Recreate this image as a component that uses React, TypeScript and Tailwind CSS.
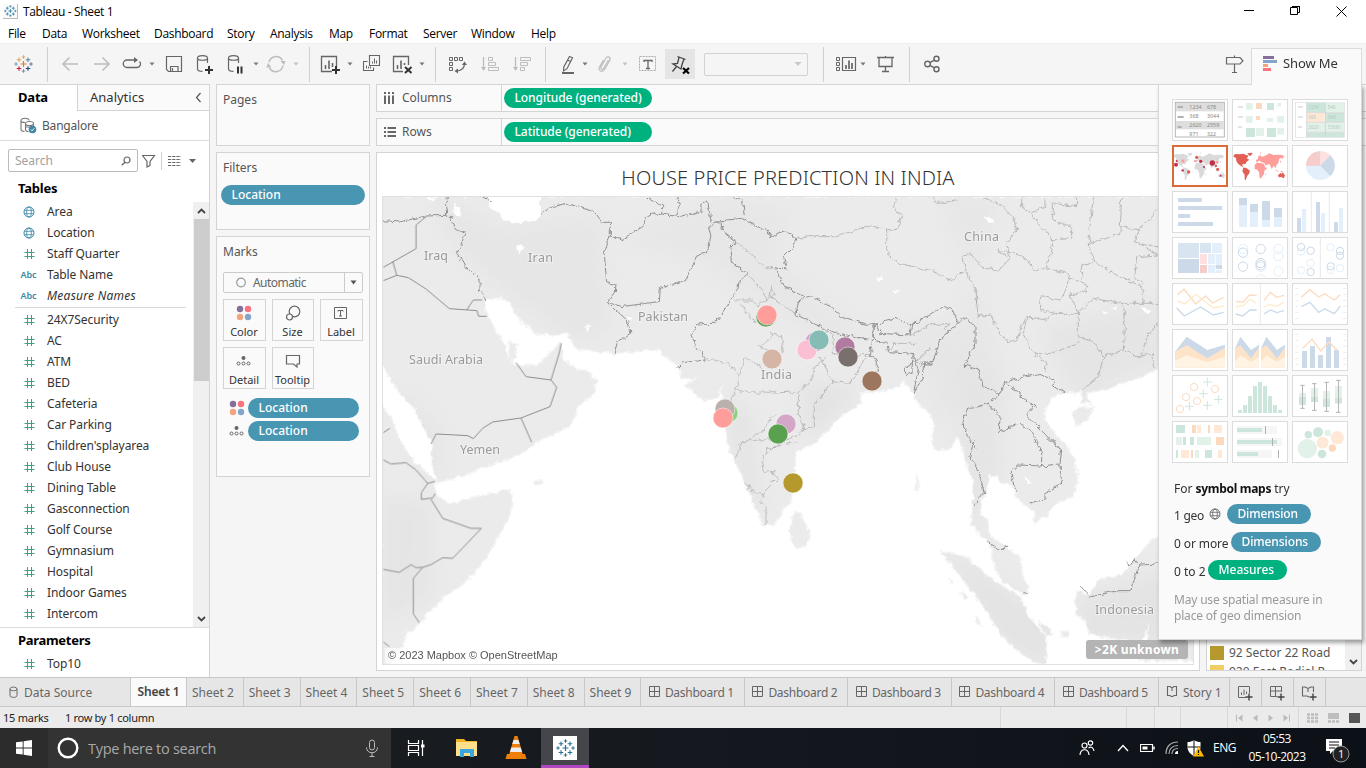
import React from "react";

const INK = "#666";
const PALE = "#bdbdbd";

function Svg({ children, w = 24, h = 24, className = "" }: { children: React.ReactNode; w?: number; h?: number; className?: string }) {
  return (
    <svg width={w} height={h} viewBox={`0 0 ${w} ${h}`} fill="none" className={`block shrink-0 ${className}`}>
      {children}
    </svg>
  );
}

function Plus({ x, y, s, c, w = 1.3 }: { x: number; y: number; s: number; c: string; w?: number }) {
  return <path d={`M${x - s} ${y}H${x + s}M${x} ${y - s}V${y + s}`} stroke={c} strokeWidth={w} />;
}

function TableauMark({ mono, size = 24 }: { mono?: string; size?: number }) {
  const c = (v: string) => mono ?? v;
  return (
    <svg width={size} height={size} viewBox="0 0 24 24" fill="none" className="block shrink-0">
      <Plus x={12.5} y={12} s={3} c={c("#e8762c")} w={1.2} />
      <Plus x={8} y={7.8} s={2.3} c={c("#e5a05a")} w={1.1} />
      <Plus x={17} y={7.8} s={2.3} c={c("#5b879b")} w={1.1} />
      <Plus x={8} y={16.5} s={2.3} c={c("#c72037")} w={1.1} />
      <Plus x={17} y={16.5} s={2.3} c={c("#1f447e")} w={1.1} />
      <Plus x={12.5} y={5} s={1.8} c={c("#e8a26c")} w={1} />
      <Plus x={12.5} y={19} s={1.8} c={c("#7b8ca8")} w={1} />
      <Plus x={5} y={12} s={1.8} c={c("#59a9b8")} w={1} />
      <Plus x={20} y={12} s={1.8} c={c("#6f6fa0")} w={1} />
    </svg>
  );
}

function Caret({ className = "", c = "#777" }: { className?: string; c?: string }) {
  return (
    <Svg w={8} h={8} className={className}>
      <path d="M1.500 2.500h5L4 5.500z" fill={c} />
    </Svg>
  );
}

const Sep = ({ className = "" }: { className?: string }) => <div className={`h-[35px] w-px shrink-0 bg-[#d0d0d0] ${className}`} />;

function Cylinder() {
  return (
    <path d="M14.500 11V6c0-3.300-10-3.300-10 0v11c0 1.600 2.500 2.400 5 2.400M4.500 6c0 3 10 3 10 0" stroke={INK} strokeWidth="1.200" />
  );
}

function Toolbar() {
  return (
    <div className="flex h-[41px] items-center border-t border-[#efefef] bg-[#f5f5f5]">
      <div className="ml-[11px]"><TableauMark /></div>
      <Sep className="ml-3" />
      <Svg className="ml-2.5"><path d="M20 12H5M11.500 5.500 5 12l6.500 6.500" stroke={PALE} strokeWidth="1.600" /></Svg>
      <Svg className="ml-2"><path d="M4 12h15M12.500 5.500 19 12l-6.500 6.500" stroke={PALE} strokeWidth="1.600" /></Svg>
      <Svg className="ml-1.5"><path d="M14 8H7a3.500 3.500 0 0 0 0 7.500h10a3.500 3.500 0 0 0 2.500-6M11.500 8h5" stroke={INK} strokeWidth="1.300" /><path d="M14 5v6l4-3z" fill={INK} /></Svg>
      <Caret className="ml-1" />
      <Svg className="ml-1.5"><path d="M4.500 4.500h15v15h-13l-2-2zM8.500 19v-4.500h7.500V19M10.500 16v3" stroke={INK} strokeWidth="1.200" /></Svg>
      <Svg className="ml-[7px]"><Cylinder /><Plus x={16} y={18} s={4} c="#333" w={2} /></Svg>
      <Svg className="ml-[7px]"><Cylinder /><path d="M14 14.500v7M17.500 14.500v7" stroke="#333" strokeWidth="2" /></Svg>
      <Caret className="ml-1" />
      <Svg className="ml-1"><path d="M5 10a7.300 7.300 0 0 1 13.500-1.500M19 13.500A7.300 7.300 0 0 1 5.500 16" stroke={PALE} strokeWidth="1.500" /><path d="M21.500 9h-5l3.500 4zM2.500 15.500h5L4 11z" fill={PALE} /></Svg>
      <Caret className="ml-1" c="#c2c2c2" />
      <Sep className="ml-[9px]" />
      <Svg className="ml-2"><path d="M14 19.500H3.500v-15h15V15" stroke={INK} strokeWidth="1.300" /><path d="M7.500 17v-4M11 17V8.500M14.500 15v-4" stroke={INK} strokeWidth="1.600" /><Plus x={18} y={18} s={4} c="#333" w={2} /></Svg>
      <Caret className="ml-1" />
      <Svg className="ml-[5px]"><path d="M10.500 3.500h10v10h-10zM8.500 9.500h-4v9h10v-3" stroke={INK} strokeWidth="1.100" /><path d="M13.500 11.500v-2M15.500 11.500v-5M17.500 11.500v-3M7.500 16.500v-3M9.500 16.500v-2M11.500 16.500v-2" stroke={INK} /></Svg>
      <Svg className="ml-[7px]"><path d="M13 19.500H3.500v-15h15V13" stroke={INK} strokeWidth="1.300" /><path d="M7.500 17v-4M11 17V8.500M14.500 13v-2" stroke={INK} strokeWidth="1.600" /><path d="m15 15 6.500 6M21.500 15 15 21" stroke="#333" strokeWidth="2" /></Svg>
      <Caret className="ml-1" />
      <Sep className="ml-[9px]" />
      <Svg className="ml-[9px]"><path d="M4.500 5.500h3v3h-3zM9.500 5.500h3v3h-3zM14.500 5.500h3v3h-3zM4.500 10.500h3v3h-3zM4.500 15.500h3v3h-3z" stroke={INK} /><path d="M19.500 11.500c0 5-3 7-7.500 7.500" stroke={INK} strokeWidth="1.200" /><path d="m17 13 2.500-3.500L22 13zM13 16.500 9.500 19l3.500 2.500z" fill={INK} /></Svg>
      <Svg className="ml-[9px]"><path d="M5.500 5v13" stroke={PALE} strokeWidth="1.300" /><path d="M3 15l2.500 4L8 15z" fill={PALE} /><path d="M10.500 5.500h4v3h-4zM10.500 10.500h7v3h-7zM10.500 15.500h10v3h-10z" stroke={PALE} /></Svg>
      <Svg className="ml-2"><path d="M5.500 5v13" stroke={PALE} strokeWidth="1.300" /><path d="M3 15l2.500 4L8 15z" fill={PALE} /><path d="M10.500 5.500h10v3h-10zM10.500 10.500h7v3h-7zM10.500 15.500h4v3h-4z" stroke={PALE} /></Svg>
      <Sep className="ml-[11px]" />
      <Svg className="ml-2.5"><path d="m13.500 4.500 3 1.200-5.500 11-3.500 2.200.3-4zM11.500 8l3 1.500" stroke={INK} strokeWidth="1.200" /><path d="M6 21h12" stroke={INK} strokeWidth="2" /></Svg>
      <Caret className="ml-px" />
      <Svg className="ml-1"><path d="m15.500 8-5 8.500c-1 1.700-3.500.5-2.500-1.500l5-9c1.500-2.500 5-.5 4 2l-5.500 9.500c-2 3.500-7 1-5-2.500l4-7" stroke={PALE} strokeWidth="1.200" /></Svg>
      <Caret className="ml-1" c="#c2c2c2" />
      <Svg className="ml-1.5"><path d="M4.500 4.500h16v14h-16z" stroke="#aaa" strokeDasharray="2 1" /><path d="M9 10V8.500h8V10M13 8.500v8M11 16.500h4" stroke={INK} strokeWidth="1.300" /></Svg>
      <div className="ml-1.5 flex size-[30px] items-center justify-center bg-[#e5e5e5]">
        <Svg><path d="m9.500 4.500 8 3M11 5.500l-1.500 6-4.500.5 8 5 1-4.500 2-5.500M8.500 14.500l-4 5" stroke="#444" strokeWidth="1.300" /><path d="m15 16 6 5.500M21 16l-6 5.500" stroke="#000" strokeWidth="2.200" /></Svg>
      </div>
      <div className="ml-[9px] flex h-[23px] w-[104px] items-center justify-end rounded-xs border border-[#d2d2d2] bg-[#f5f5f5] pr-1">
        <Svg w={10} h={8}><path d="M1.500 2h7L5 6z" fill="#c8c8c8" /></Svg>
      </div>
      <Sep className="ml-[15px]" />
      <Svg className="ml-2.5"><path d="M2.500 5.500h3v3h-3zM2.500 10.500h3v3h-3zM2.500 15.500h3v3h-3z" stroke={INK} /><path d="M8.500 5.500h13v13h-13z" stroke={INK} strokeWidth="1.200" /><path d="M12 17v-4M15 17V8.500M18 17v-6" stroke={INK} strokeWidth="1.700" /></Svg>
      <Caret className="ml-px" />
      <Svg className="ml-1.5"><path d="M4 5.500h17M6 6v8.500h13V6M12.500 4v1.500M12.500 14.500v4.500M9 19.500h7" stroke={INK} strokeWidth="1.300" /></Svg>
      <Sep className="ml-3" />
      <Svg className="ml-2.5"><circle cx="7.500" cy="12" r="2.800" stroke={INK} strokeWidth="1.400" /><circle cx="16.500" cy="6.800" r="2.500" stroke={INK} strokeWidth="1.400" /><circle cx="16.500" cy="17.200" r="2.500" stroke={INK} strokeWidth="1.400" /><path d="m10 10.600 4.300-2.500M10 13.400l4.300 2.500" stroke={INK} strokeWidth="1.300" /></Svg>
      <Svg className="ml-[278px]"><path d="M4.500 5.500H18l3 3.300-3 3.200H4.500zM12.500 3.500v2M12.500 12v8M10 20.500h5" stroke={INK} strokeWidth="1.200" /></Svg>
    </div>
  );
}

function Globe({ c = "#3b87a5", s = 12 }: { c?: string; s?: number }) {
  return (
    <svg width={s} height={s} viewBox="0 0 12 12" fill="none" stroke={c} className="block shrink-0">
      <circle cx="6" cy="6" r="5" />
      <ellipse cx="6" cy="6" rx="2.300" ry="5" strokeWidth=".8" />
      <path d="M1.500 4.300h9M1.500 7.700h9" strokeWidth=".8" />
    </svg>
  );
}

const Hash = () => (
  <Svg w={12} h={12}><path d="M4.500 1v10M8.500 1v10M1.500 4.500h10M1.500 8.500h10" stroke="#3aa383" strokeWidth="1" /></Svg>
);

function Field({ kind, name }: { kind: string; name: string }) {
  return (
    <div className="flex h-[21px] shrink-0 items-center">
      <div className="flex w-[47px] justify-center pl-2.5 pr-0">
        {kind === "geo" && <Globe />}
        {kind === "num" && <Hash />}
        {kind !== "geo" && kind !== "num" && <span className="text-[9px] font-semibold tracking-[0px] text-[#3b87a5]">Abc</span>}
      </div>
      <span className={`text-[12px] text-[#333] ${kind === "abci" ? "italic tracking-[0.250px]" : "tracking-[-0.080px]"}`}>{name}</span>
    </div>
  );
}

const DIMS = [["geo", "Area"], ["geo", "Location"], ["num", "Staff Quarter"], ["abc", "Table Name"], ["abci", "Measure Names"]];
const MEAS = ["24X7Security", "AC", "ATM", "BED", "Cafeteria", "Car Parking", "Children'splayarea", "Club House", "Dining Table", "Gasconnection", "Golf Course", "Gymnasium", "Hospital", "Indoor Games", "Intercom"];

function DataPane() {
  return (
    <div className="flex w-[210px] shrink-0 flex-col border-r border-t border-[#d4d4d4] bg-white">
      <div className="flex h-[26px]">
        <div className="w-[77px] pl-[18px] text-[13px] font-bold leading-[25px] tracking-[-0.200px] text-black">Data</div>
        <div className="flex flex-1 items-center justify-between border-b border-l border-[#d4d4d4] bg-[#fafafa] pl-3 pr-[7px]">
          <span className="text-[13px] text-[#333]">Analytics</span>
          <Svg w={7} h={11}><path d="M5.500 1 1.500 5.500l4 4.500" stroke="#555" strokeWidth="1.200" /></Svg>
        </div>
      </div>
      <div className="flex h-[30px] items-center border-b border-[#dcdcdc] pl-5">
        <Svg w={17} h={17}>
          <path d="M9 3.500C9 .5 1 .5 1 3.500v9c0 1 1.500 1.800 3.500 2M13.500 6.500c0-2.700-8-2.700-8 0v6c0 1.500 1.500 2 3 2.200M5.500 6.500c0 2.700 8 2.700 8 0v3M1 3.500c0 1.200 1.500 2 4 2M6 10h5" stroke="#777" strokeWidth="1.100" />
          <circle cx="12.500" cy="12.500" r="3.800" fill="#3b87a5" /><path d="m10.800 12.500 1.300 1.300 2.200-2.500" stroke="#fff" />
        </Svg>
        <span className="ml-[5px] text-[12px] tracking-[-0.200px] text-[#555]">Bangalore</span>
      </div>
      <div className="mt-2 flex h-[23px] items-center pl-2">
        <div className="flex h-[23px] w-[130px] items-center justify-between rounded-xs border border-[#bbb] pl-1.5 pr-1.5">
          <span className="text-[12px] text-[#a0a0a0]">Search</span>
          <Svg w={10} h={10}><circle cx="6" cy="4" r="3" stroke={INK} strokeWidth="1.200" /><path d="M4 6.200.8 9.300" stroke={INK} strokeWidth="1.300" /></Svg>
        </div>
        <Svg w={14} h={14} className="ml-1"><path d="M.5 1.500h12L8 7.500v4l-3 1.500V7.500z" stroke={INK} strokeWidth="1.200" /></Svg>
        <div className="ml-[5px] h-[18px] w-px bg-[#d0d0d0]" />
        <Svg w={13} h={11} className="ml-1.5"><path d="M0 1.500h13M0 4.500h13M0 7.500h13M0 10.500h13" stroke={INK} strokeWidth="1.100" strokeDasharray="3.200 1" /></Svg>
        <Svg w={8} h={6} className="ml-2"><path d="M0 1h7L3.500 5z" fill={INK} /></Svg>
      </div>
      <div className="flex h-[29px] items-center pl-[18px] pt-[5px] text-[13px] font-bold tracking-[-0.200px] text-black">Tables</div>
      <div className="flex h-[426px] justify-between overflow-hidden">
        <div className="flex w-[193px] flex-col">
          {DIMS.map(([k, n]) => <Field key={n} kind={k} name={n} />)}
          <div className="mb-px ml-[15px] mt-px h-px w-[171px] shrink-0 bg-[#d8d8d8]" />
          {MEAS.map((n) => <Field key={n} kind="num" name={n} />)}
        </div>
        <div className="mt-px flex w-[16px] flex-col items-center bg-[#f0f0f0]">
          <div className="flex h-[17px] items-center"><Svg w={9} h={6}><path d="m1 5 3.500-3.500L8 5" stroke="#444" strokeWidth="1.800" /></Svg></div>
          <div className="h-[162px] w-[15px] bg-[#cdcdcd]" />
          <div className="flex flex-1 items-end pb-[5px]"><Svg w={9} h={6}><path d="m1 1 3.500 3.500L8 1" stroke="#444" strokeWidth="1.800" /></Svg></div>
        </div>
      </div>
      <div className="flex flex-1 flex-col border-t border-[#dcdcdc] pt-[1px]">
        <div className="h-[23px] pl-[18px] text-[13px] font-bold leading-[23px] tracking-[-0.300px] text-black">Parameters</div>
        <div className="pt-px"><Field kind="num" name="Top10" /></div>
      </div>
    </div>
  );
}

const ColorDots = () => (
  <Svg w={16} h={16}><circle cx="4" cy="4" r="3.200" fill="#85709a" /><circle cx="12" cy="4" r="3.200" fill="#f9737f" /><circle cx="4" cy="12" r="3.200" fill="#f2a57c" /><circle cx="12" cy="12" r="3.200" fill="#84a5cb" /></Svg>
);
const DetailDots = () => (
  <Svg w={16} h={16}><circle cx="7.500" cy="5" r="2" fill={INK} /><circle cx="2.500" cy="10.500" r="1.500" stroke={INK} /><circle cx="7.500" cy="10.500" r="1.500" stroke={INK} /><circle cx="12.500" cy="10.500" r="1.500" stroke={INK} /></Svg>
);

function MarkButton({ icon, label, w }: { icon: React.ReactNode; label: string; w: string }) {
  return (
    <div className={`flex h-[42px] shrink-0 flex-col items-center border border-[#d4d4d4] pr-px pt-[5px] ${w}`}>
      {icon}
      <span className="mt-[3px] text-[11px] leading-4 text-[#333]">{label}</span>
    </div>
  );
}

const pill = "flex h-5 shrink-0 items-center rounded-full pl-[10.500px] text-[12px] font-medium text-white";

function Cards() {
  const title = "pl-1.5 text-[12px] text-[#555]";
  const card = "flex flex-col border border-[#d4d4d4] bg-[#fafafa]";
  return (
    <div className="ml-1.5 flex w-[154px] shrink-0 flex-col gap-1.5">
      <div className={`h-[62px] pt-[6px] ${card}`}><span className={title}>Pages</span></div>
      <div className={`h-[78px] pt-[6px] ${card}`}>
        <span className={title}>Filters</span>
        <div className={`ml-1 mt-2 w-[144px] bg-[#4996b2] ${pill}`}>Location</div>
      </div>
      <div className={`h-[241px] pt-[6px] ${card}`}>
        <span className={title}>Marks</span>
        <div className="ml-1.5 mt-[11px] flex h-[21px] w-[140px] items-center rounded-xs border border-[#ccc]">
          <Svg w={12} h={12} className="ml-[11px]"><circle cx="6" cy="5.500" r="4.300" stroke="#999" strokeWidth="1.200" /></Svg>
          <span className="ml-1.5 flex-1 text-[12px] tracking-[-0.550px] text-[#666]">Automatic</span>
          <div className="flex h-full w-[18px] items-center justify-center border-l border-[#ccc]"><Svg w={7} h={5}><path d="M.5.5h6l-3 4z" fill="#555" /></Svg></div>
        </div>
        <div className="ml-1.5 mt-1.5 flex gap-1.5">
          <MarkButton w="w-[43px]" label="Color" icon={<ColorDots />} />
          <MarkButton w="w-[42px]" label="Size" icon={<Svg w={16} h={16}><circle cx="9.500" cy="6.500" r="5.300" stroke={INK} strokeWidth="1.200" /><circle cx="4.500" cy="12" r="3" stroke={INK} strokeWidth="1.200" fill="#fafafa" /></Svg>} />
          <MarkButton w="w-[43px]" label="Label" icon={<Svg w={16} h={16}><path d="M1.500 2.500h12v11h-12z" stroke={INK} /><path d="M5 6.500V5.500h5v1M7.500 5.500v5.500M6 11h3" stroke={INK} /></Svg>} />
        </div>
        <div className="ml-1.5 mt-1.5 flex gap-1.5">
          <MarkButton w="w-[43px]" label="Detail" icon={<DetailDots />} />
          <MarkButton w="w-[42px]" label="Tooltip" icon={<Svg w={16} h={16}><path d="M1.500 2.500h13v8.500H12v3L8.500 11h-7z" stroke={INK} strokeWidth="1.200" /></Svg>} />
        </div>
        <div className="ml-3 mt-[9px] flex items-center gap-[3px]"><ColorDots /><div className={`w-[111px] bg-[#4996b2] ${pill}`}>Location</div></div>
        <div className="ml-3 mt-[3px] flex items-center gap-[3px]"><DetailDots /><div className={`w-[111px] bg-[#4996b2] ${pill}`}>Location</div></div>
      </div>
    </div>
  );
}

const LAND = "M382 197H1196V355L1158 368 1152 371 1140 377 1123 382 1103 390 1085 392 1089 403 1083 402 1082 392 1065 392 1053 397 1044 408 1044 420 1057 437 1068 448 1075 463 1077 483 1073 495 1053 505 1047 515 1035 522 1034 510 1023 503 1017 495 1012 485 1000 481 997 475 988 475 988 485 980 502 981 515 987 520 990 537 1003 545 1020 558 1022 575 1028 592 1025 594 1003 582 994 563 990 543 972 525 973 507 975 483 965 460 960 440 957 437 950 448 938 450 933 444 935 423 927 410 918 403 912 390 903 380 898 387 873 392 860 392 860 403 840 417 815 442 803 448 795 453 794 470 792 490 790 503 783 508 775 523 764 526 753 500 741 473 729 447 726 433 724 407 721 383 718 397 704 400 686 385 701 377 683 379 678 365 666 357 659 349 614 353 576 348 568 332 553 335 536 333 519 318 511 303 503 298 486 298 483 308 492 325 501 340 511 362 519 367 539 365 553 350 561 343 563 360 576 370 586 371 596 382 593 393 576 407 576 417 563 430 543 438 523 452 491 465 453 478 438 482 432 462 433 440 429 437 416 410 396 387 382 363Z";
const AFRICA = "M382 407 390 417 398 437 409 457 434 480 436 495 449 505 476 498 509 490 512 500 509 515 500 532 491 548 478 568 464 582 443 598 430 610 419 623 406 633 401 648 389 664H382Z";
const ISLANDS = "M942 552 965 557 980 570 997 583 1020 597 1028 617 1046 637 1045 662 1033 662 1015 648 1000 633 988 612 977 597 962 577ZM1077 592 1090 597 1098 580 1123 575 1137 557 1153 540 1196 520V660H1140L1147 640 1150 622 1140 642 1130 640 1112 638 1090 634 1085 620 1078 615 1075 600ZM795 512 800 516 810 535 806 545 797 548 792 542 791 525ZM1073 413 1080 408 1093 408 1087 420 1077 425ZM510 343 516 344 515 358 510 360ZM1040 623 1047 627 1052 634 1046 635ZM1062 632h5v4h-5ZM535 482 543 482 536 485ZM917 475 918 480 916 492ZM961 592 967 597 965 599ZM975 616 980 623 977 622ZM947 578 952 582Z";

function Geography() {
  return (
    <svg width="812" height="467" viewBox="383 197 812 467" className="block" fill="none">
      <defs>
        <filter id="coast" x="0" y="0" width="1" height="1">
          <feTurbulence type="fractalNoise" baseFrequency=".18" numOctaves="2" seed="4" result="n" />
          <feDisplacementMap in="SourceGraphic" in2="n" scale="6" xChannelSelector="R" yChannelSelector="G" />
        </filter>
        <filter id="soft" x="-.3" y="-.3" width="1.600" height="1.600"><feGaussianBlur stdDeviation="9" /></filter>
        <clipPath id="land"><path d={LAND + AFRICA + ISLANDS} /></clipPath>
      </defs>
      <g filter="url(#coast)">
        <path d="M370 190H1200V670H370Z" fill="#fff" />
        <path d={LAND + AFRICA + ISLANDS} fill="#ebebeb" stroke="#f4f4f4" strokeWidth="3" />
        <path d={LAND + AFRICA + ISLANDS} fill="#ebebeb" />
        <g clipPath="url(#land)">
          <g filter="url(#soft)" fill="#e3e3e3">
            <path d="M430 190 500 230 600 215 610 330 570 340 500 290 450 240Z" opacity=".6" />
            <path d="M620 240 720 200 790 210 770 260 860 330 960 320 1000 200 940 190 980 300 1010 400 940 420 900 330 830 345 760 300 700 260Z" opacity=".55" />
            <path d="M1040 330 1160 300 1160 360 1080 400Z" opacity=".8" />
            <path d="M950 350 1000 380 1000 480 970 540 960 430Z" opacity=".8" />
            <path d="M395 385 440 430 440 480 420 460ZM382 500 430 500 430 600 382 620Z" opacity=".7" />
            <path d="M725 400 750 410 760 520 745 500ZM800 380 860 390 810 440Z" />
            <path d="M940 545 1050 620 1050 670 1000 640ZM1080 600 1194 560 1194 640 1080 640Z" />
          </g>
        </g>
        <path d="M489 194H540V219L533 221 519 223 505 221 497 212 489 207ZM425 197 437 198 434 203ZM453 203 460 208 461 217 455 213ZM516 247 520 245 523 249 519 252ZM626 317 633 318 627 323ZM586 326 590 327 587 331ZM984 216 993 218 994 224 987 222ZM876 278 882 276 884 280 879 282ZM892 291 901 290 896 294ZM1023 477 1032 482 1028 483ZM1102 311 1110 313 1104 314ZM1142 308 1151 310 1147 316ZM1111 309 1116 306 1114 312Z" fill="#fff" />
      </g>
      <g stroke="#8f8f8f" strokeWidth="1" strokeLinejoin="round">
        <g transform="translate(376 190) scale(.3333)" strokeWidth="3">
          <path d="M22 232 120 176 120 105 150 80M50 213 62 256 22 272M62 256 97 263 150 297 220 356 303 362 308 379 332 379M272 360 292 330 318 330M420 518 450 560 525 570 542 592 522 650 435 684 350 696 320 715 292 746 275 737 180 732 165 762M435 684 467 757M22 728 42 715M525 570 548 495 556 460" />
        </g>
        <g transform="translate(376 440) scale(.3333)" strokeWidth="3">
          <path d="M22 60 45 72 90 68 120 90 155 130 136 158 136 178 170 174 178 160M155 130 178 124M165 178 200 235 285 265 316 265 230 355 200 353 165 374 140 382 112 415V522L130 548M22 388 70 397 105 374 120 383 140 382M22 606 40 620" />
        </g>
        <g filter="url(#coast)">
          <g transform="translate(376 190) scale(.3333)" strokeWidth="3">
            <path d="M22 92 70 96 150 78 215 76 210 20M222 80 235 115 268 130 245 190 265 228 312 266 312 296 332 330M322 20 345 34M492 73 530 50 570 40 650 64 678 97 703 97V135L737 150 803 108 808 85 835 68 905 80 975 68 975 40 995 30 1005 95 1100 85 1200 140M703 135 685 190 692 278 720 285 718 305 694 335 735 350 850 335 853 295 930 270 965 195 990 190 1005 140 998 110 1050 90M694 335 750 388 763 430 725 455 715 488M810 20 860 48 860 72M905 22 912 45 900 80M1070 20 1100 30 1105 75M1035 100 1040 125 1080 155 1062 175 1066 215 1115 252 1090 270 1085 300 1060 330 1055 350 1015 400 965 402 945 435 962 470 990 510 920 518 905 532" />
            <path d="M1080 155 1120 185 1165 230 1200 240M1115 252 1160 300 1172 330 1200 310M1075 330 1130 330 1145 345 1172 330M1090 340 1140 400M1200 430 1150 470 1200 490M990 505 1060 520 1090 560 1080 600 1150 610 1200 600M1090 560 1105 500 1155 530M1080 600 1060 640M1200 670 1150 730 1085 765" strokeWidth="2" stroke="#aaa" />
          </g>
          <g transform="translate(770 190) scale(.3333)" strokeWidth="3">
            <path d="M0 138 45 122 78 145 65 175 40 200 52 240 0 230M20 238 38 285 100 320 80 345 75 372 160 415 205 430 308 450 310 400 290 403 215 380 180 350 125 318 105 322M308 450 315 400 328 420 330 430 420 435 425 405 375 385 345 392 328 410M308 450 352 460 355 485 430 490 425 550 410 555 400 535 430 520M430 490 445 540 430 610 460 560 465 515 485 525 510 450 565 400 550 360 520 350 480 375 425 405M308 450 300 500 322 510 322 545M565 400 585 380 615 410 615 460 585 525 625 540 640 590 690 610 655 640 590 660 578 700 595 740 620 780M690 610 705 575 810 550 850 570 850 590 885 605M705 575 770 630 795 650 770 675 870 780M655 640 690 680 688 725 750 700 790 730 810 780M450 525 485 525" />
            <path d="M78 145 120 140 200 140 300 105 350 120 350 190 385 220 500 245 545 272 585 240 580 200 600 190 640 235 685 240 720 205 680 180 735 190M350 120 380 115 395 80 370 50 380 25M490 25 510 40 560 30M640 22 700 50 730 80 740 120 710 160 720 205M735 190 780 215 790 240 830 235 850 150 780 70 755 50 755 22M780 70 825 50 825 25M845 150 905 145 905 115 850 90 850 40 920 50 920 22M830 235 890 250 900 265 870 330 815 320 810 360 850 370 930 370M900 265 945 280 950 305 900 315 925 370 970 325 1050 340 1140 340 1165 345M970 22 955 165 1050 130 1055 22M955 165 975 215 1030 250 1115 290 1120 340M1055 110 1110 120 1165 50M1110 120 1090 155 1165 175M1130 175 1165 195 1100 200 1095 260 1115 280M975 215 935 225 935 270M1060 340 1065 380 1060 480 1105 500 1150 490 1150 535M1165 400 1130 440 1115 495M925 370 925 440 970 455 1000 500 1060 480M1000 500 985 560 940 600M930 455 850 490 790 490 760 430 770 380 830 390 850 370M790 490 830 520 825 545M615 300 625 380 660 375 690 430 710 455 740 450 765 380M585 240 620 300 620 340M5 290 0 320 75 370M160 415 190 440 190 490 240 500 300 490M0 430 35 440 40 490M170 500 130 535 125 570 85 610 85 665 105 720 130 710 130 650 185 575 245 580 290 490M0 610 85 605M105 720 0 780M150 500 190 580M420 435 480 405 535 400 525 420M355 485 370 460 440 460M465 515 430 520 480 475" strokeWidth="2.200" stroke="#a6a6a6" />
          </g>
          <g transform="translate(376 440) scale(.3333)" strokeWidth="2" stroke="#aaa"><path d="M1200 -5 1100 5 1080 55M1175 20 1160 60 1165 95 1200 95M1105 125 1130 155 1160 160 1190 130 1200 120M1160 160 1155 185 1170 200V258M1175 25 1200 25" /></g>
          <g transform="translate(770 440) scale(.3333)" strokeWidth="3">
            <path d="M612 0 600 50 625 90 642 155 615 195M790 0 815 35 815 78 745 75 722 100 740 158M815 78 870 72 875 30 845 0M870 72 875 130 825 160 825 180 782 192M655 305 685 328 715 318M757 458 773 460M933 440 960 472 1025 455 1080 455 1110 375 1165 372M1065 365 1080 378 1095 355 1100 378" />
            <path d="M0 90 28 120 0 125M0 28 60 10 80 5" stroke="#aaa" strokeWidth="2" />
          </g>
        </g>
      </g>
      <g fontFamily="'Noto Sans', sans-serif" fontSize="12.500" fill="#9a9a9a" stroke="#f1f1f1" strokeWidth="2" paintOrder="stroke">
        <text x="424" y="260" textLength="24">Iraq</text>
        <text x="528" y="262" textLength="25">Iran</text>
        <text x="638" y="321" textLength="50">Pakistan</text>
        <text x="409" y="364" textLength="74">Saudi Arabia</text>
        <text x="460" y="454" textLength="40">Yemen</text>
        <text x="964" y="241" textLength="35">China</text>
        <text x="761" y="379" textLength="31">India</text>
        <text x="1095" y="614" textLength="59">Indonesia</text>
      </g>
      <g stroke="#fff" strokeOpacity=".6" strokeWidth=".8">
        {DOTS.map(([x, y, c], i) => <circle key={i} cx={x} cy={y} r="10" fill={c as string} />)}
      </g>
    </svg>
  );
}

const DOTS: [number, number, string][] = [
  [766, 317, "#59a14f"], [767, 315, "#ff9d9a"], [815, 342, "#d4a6c8"], [807, 350, "#fabfd2"], [819, 340, "#86bcb6"],
  [845, 347, "#b07aa1"], [848, 357, "#79706e"], [772, 359, "#d7b5a6"], [872, 381, "#9d7660"], [728, 413, "#8cd17d"],
  [725, 409, "#bab0ac"], [723, 418, "#ff9d9a"], [786, 424, "#d4a6c8"], [778, 434, "#59a14f"], [793, 483, "#b6992d"],
];

function Shelf({ icon, name, value }: { icon: React.ReactNode; name: string; value: string }) {
  return (
    <div className="flex h-7 shrink-0 items-center border-y border-l border-[#d4d4d4] bg-[#fafafa]">
      <div className="flex h-full w-[125px] items-center border-r border-[#d4d4d4] pl-[7px]">
        {icon}
        <span className="ml-[7px] text-[12px] text-[#555]">{name}</span>
      </div>
      <div className={`ml-0.5 w-[148px] tracking-[-0.060px] bg-[#00b180] ${pill}`}>{value}</div>
    </div>
  );
}

function Workspace() {
  return (
    <div className="ml-1.5 flex min-w-0 flex-1 flex-col gap-1.5">
      <Shelf name="Columns" value="Longitude (generated)" icon={<Svg w={11} h={12}><path d="M1 0v2M5 0v2M9 0v2M1 3.500V12M5 3.500V12M9 3.500V12" stroke="#666" strokeWidth="2" /></Svg>} />
      <Shelf name="Rows" value="Latitude (generated)" icon={<Svg w={12} h={12} className="-mr-px"><path d="M0 2h2M0 6h2M0 10h2M3.500 2H12M3.500 6H12M3.500 10H12" stroke="#666" strokeWidth="2" /></Svg>} />
      <div className="flex gap-1.5">
        <div className="relative flex h-[519px] w-[824px] flex-col border border-[#d4d4d4] bg-white px-[5px]">
          <div className="flex h-[43px] items-center justify-center pt-[6px] text-[20px] font-light tracking-[0.130px] text-[#333]"><span>HOUSE PRICE PREDICTION IN INDIA</span></div>
          <div className="border border-[#e0e0e0]"><div className="h-[467px] w-[810px] overflow-hidden"><Geography /></div></div>
          <div className="absolute bottom-[7px] left-[8px] bg-white/70 px-[3px] font-['Liberation_Sans'] text-[11px] leading-[15px] text-[#555]">© 2023 Mapbox © OpenStreetMap</div>
          <div className="absolute bottom-[11px] right-[11px] flex h-[19px] w-[102px] items-center justify-center rounded-[3px] bg-[#b4b4b4] text-[12px] font-bold tracking-[0.300px] text-white">&gt;2K unknown</div>
        </div>
        <div className="flex h-[519px] w-[156px] justify-between overflow-hidden border border-[#d4d4d4] bg-white">
          <div className="flex flex-col gap-[3px] pl-[3px] pt-[492px]">
            <div className="flex h-4 shrink-0 items-center gap-[5px] text-[12px] text-[#555]"><div className="size-3.5 bg-[#b6992d]" />92 Sector 22 Road</div>
            <div className="flex h-4 shrink-0 items-center gap-[5px] text-[12px] text-[#555]"><div className="size-3.5 bg-[#f1ce63]" />920 East Rodial R</div>
          </div>
          <div className="flex w-4 items-end justify-center bg-[#f0f0f0] pb-[5px]"><Svg w={9} h={6}><path d="m1 1 3.500 3.500L8 1" stroke="#444" strokeWidth="1.800" /></Svg></div>
        </div>
      </div>
    </div>
  );
}

const B1 = "#cbd9e8", B2 = "#e3f0fb", G1 = "#cde6db", G2 = "#e2f2e9", O1 = "#fad9bf", O2 = "#ffe9d6", R1 = "#f6cdca";
const bars = (a: number[][], f: string) => a.map(([x, y, w, h], i) => <rect key={i} x={x} y={y} width={w} height={h} fill={f} />);
const rings = (a: number[][], s: string) => a.map(([x, y], i) => <circle key={i} cx={x} cy={y} r={a[i][2] ?? 14} stroke={s} strokeWidth="3" />);
const line = (d: string, s: string) => <path d={d} stroke={s} strokeWidth="4" />;

function World({ west, east, south }: { west: string; east: string; south: string }) {
  return (
    <g strokeLinejoin="round">
      <path d="M5 30 12 27 24 28 34 26 42 30 50 32 44 40 52 44 44 50 40 58 34 56 30 60 36 68 26 62 18 56 13 48 12 38 5 36ZM46 25 62 23 60 28 54 34 48 28Z" fill={west} />
      <path d="M34 68 42 68 54 77 51 86 46 92 41 105 38 104 38 90 31 79Z" fill={west} />
      <path d="M74 52 72 45 78 42 78 36 84 30 90 36 104 30 112 25 124 30 146 29 158 33 152 38 153 44 147 38 141 42 139 54 133 60 131 70 125 62 119 72 113 58 107 58 102 62 97 54 86 50 82 46 78 50ZM68 60 74 53 86 54 96 57 100 68 106 68 97 78 96 87 87 100 83 100 81 82 76 74 68 72ZM101 84 103 86 100 93ZM145 46 148 50 144 54ZM128 72 134 76 142 80 134 79ZM83 24 88 22 86 27Z" fill={east} />
      <path d="M138 90 146 84 150 86 153 82 159 92 155 100 148 96 140 97ZM145 78 154 80 150 82Z" fill={south} />
    </g>
  );
}

const CELLS: React.ReactNode[] = [
  <g key="0"><rect x="10" y="10" width="147" height="104" fill="#fff" stroke="#b5b5b5" strokeWidth="3" />{bars([[12, 12, 143, 25], [12, 66, 143, 25]], "#dedede")}{bars([[17, 21, 16, 6], [17, 51, 18, 6], [17, 81, 12, 6]], "#b0b0b0")}
    <g fill="#888" fontSize="16" fontFamily="Noto Sans">{["1234", "368", "2620", "971"].map((t, i) => <text key={t} x="52" y={31 + i * 26.500}>{t}</text>)}{["678", "3044", "2559", "322"].map((t, i) => <text key={t} x="105" y={31 + i * 26.500}>{t}</text>)}</g></g>,
  <g key="1" transform="translate(-246 -177)">{bars([[264, 198, 15, 6], [264, 228, 15, 6], [264, 258, 12, 6]], "#e4e4e4")}{bars([[288, 189, 20, 20], [288, 228, 20, 20], [382, 189, 11, 11], [351, 234, 18, 12], [382, 228, 20, 20], [318, 264, 24, 24], [382, 264, 20, 20]], G2)}{bars([[351, 189, 21, 21], [288, 264, 27, 27], [351, 264, 27, 27]], G1)}{bars([[318, 189, 18, 18], [318, 228, 12, 12]], O1)}</g>,
  <g key="2" transform="translate(-426 -177)">{bars([[444, 198, 15, 6], [444, 228, 15, 6], [444, 258, 12, 6]], "#e4e4e4")}<rect x="436" y="187" width="147" height="105" stroke="#ddd" strokeWidth="2" />{bars([[470, 188, 56, 29], [470, 278, 112, 13], [526, 219, 56, 27]], G1)}{bars([[527, 188, 55, 29], [470, 248, 112, 28]], G2)}{bars([[470, 219, 54, 27]], O2)}<path d="M470 188V291M526 188V291M470 218H583M470 247H583M470 277H583" stroke="#ccc" strokeWidth="2" /><g fontSize="14" fill="#b4cabe" fontFamily="Noto Sans"><text x="474" y="208">1234</text><text x="533" y="208">546</text><text x="474" y="238">368</text><text x="533" y="238">340</text><text x="474" y="268">2620</text><text x="533" y="268">53890</text></g></g>,
  <g key="3"><World west="#dadada" east="#dadada" south="#dadada" />{[[12, 59, 6], [14, 48, 3], [86, 49, 5], [32, 76, 3.500], [96, 66, 3], [121, 54, 8], [132, 63, 3], [146, 92, 3]].map(([x, y, r], i) => <circle key={i} cx={x} cy={y} r={r} fill="#c22f45" />)}{[[33, 48, 5], [74, 37, 5], [70, 48, 4], [50, 81, 5], [136, 52, 4], [137, 73, 5]].map(([x, y, r], i) => <circle key={i} cx={x} cy={y} r={r} fill={i % 2 ? "#e15f55" : "#ff9d9a"} />)}</g>,
  <g key="4"><World west="#e15f55" east="#ff9d9a" south="#e15f55" /></g>,
  <g key="5" transform="translate(85 62)"><circle r="43" fill={B2} /><path d="M0 0V-43A43 43 0 0 0-43 0Z" fill={R1} /><path d="M0 0 30-31A43 43 0 0 0 0-43Z" fill="#fde0df" /><path d="M0 0 30-31A43 43 0 0 1 30 31Z" fill={B1} /></g>,
  <g key="6">{bars([[18, 21, 72, 12], [18, 45, 132, 12], [18, 69, 36, 12], [18, 93, 105, 12]], B1)}</g>,
  <g key="7" transform="translate(-246 -453)">{bars([[267, 474, 24, 87], [300, 492, 24, 69], [336, 483, 24, 78], [372, 504, 24, 57]], B2)}{bars([[267, 474, 24, 21], [300, 492, 24, 24], [336, 483, 24, 57], [372, 504, 24, 27]], B1)}</g>,
  <g key="8" transform="translate(-426 -453)"><path d="M484 455v122M538 455v122" stroke="#e8e8e8" strokeWidth="3" />{bars([[441, 534, 12, 43], [498, 486, 12, 91], [552, 546, 12, 31]], B1)}{bars([[456, 507, 12, 70], [513, 519, 12, 58], [567, 504, 12, 73]], B2)}</g>,
  <g key="9" transform="translate(-66 -591)">{bars([[84, 609, 63, 45], [150, 609, 33, 30]], "#d8e5f0")}{bars([[84, 657, 63, 42], [197, 674, 19, 13]], B1)}{bars([[186, 609, 30, 30], [174, 642, 21, 30], [197, 642, 19, 30], [174, 675, 21, 24], [197, 690, 19, 9]], B2)}{bars([[150, 642, 21, 30]], "#fde0df")}{bars([[150, 675, 21, 24]], R1)}</g>,
  <g key="10" transform="translate(-246 -591)">{rings([[279, 627], [385, 627], [385, 648], [385, 694], [332, 681], [332, 718]], B2)}{rings([[279, 638], [279, 680], [332, 627], [332, 669], [332, 676]], B1)}</g>,
  <g key="11" transform="translate(-426 -591)"><path d="M511 593v122" stroke="#e8e8e8" strokeWidth="3" />{rings([[453, 635, 11], [482, 669, 11], [453, 691, 11], [542, 622, 11], [542, 690, 11], [570, 685, 11]], B2)}{rings([[453, 621, 11], [482, 632, 11], [482, 696, 11], [570, 633, 11], [570, 647, 11], [542, 679, 11]], B1)}</g>,
  <g key="12" transform="translate(-66 -9)">{line("M82 45 102 27 137 72 167 48 187 69 221 52", "#fbdcc0")}{line("M82 63 105 71 137 43 190 84 221 78", "#fdebca")}{line("M80 84 103 108 152 81 190 105 221 97", B1)}</g>,
  <g key="13" transform="translate(-246 -9)"><path d="M331 11v121" stroke="#e8e8e8" strokeWidth="3" />{line("M258 65 280 66 298 45 320 46M342 62 361 37 380 52 402 46", "#fbdcc0")}{line("M257 81 280 77 300 57 318 69M340 81 360 73 380 79 402 67", "#fdebca")}{line("M257 102 278 108 300 90 320 90M342 102 361 90 380 98 402 92", B1)}</g>,
  <g key="14" transform="translate(-426 -9)">{line("M454 52 480 29 506 51 524 41 553 60 571 44", "#fbdcc0")}{line("M454 80 480 67 506 97 524 87 553 101 571 78", B1)}<path d="M440 24V120M584 24V120" stroke="#eee" strokeWidth="9" strokeDasharray="3 15" /></g>,
  <g key="15" transform="translate(-66 -147)"><path d="M75 215 110 170 172 210 225 194V263H75Z" fill={B1} /><path d="M75 215 110 195 172 235 225 203V263H75Z" fill="#fde3c8" /><path d="M75 242 110 226 172 246 225 230V263H75Z" fill="#fff3e3" /></g>,
  <g key="16" transform="translate(-246 -147)">{[0, 78].map((o) => <g key={o} transform={`translate(${o})`}><path d="M255 206 271 170 303 210 327 194V263H255Z" fill={B1} /><path d="M255 206 271 195 303 235 327 203V263H255Z" fill="#fde3c8" /><path d="M255 245 271 226 303 246 327 230V263H255Z" fill="#fff3e3" /></g>)}<path d="M330 149v121" stroke="#fff" strokeWidth="5" /></g>,
  <g key="17" transform="translate(-426 -147)">{bars([[456, 213, 15, 51], [480, 198, 15, 66], [504, 225, 15, 39], [528, 171, 15, 93], [552, 210, 15, 54]], B1)}{line("M459 204 486 177 512 213 537 186 564 213", "#fbdcc0")}<path d="M440 162V258M584 162V258" stroke="#eee" strokeWidth="9" strokeDasharray="3 15" /></g>,
  <g key="18" transform="translate(-66 -285)">{rings([[132, 321, 11], [195, 327, 11], [108, 351, 11], [141, 363, 11], [90, 387, 11]], "#fbdcc0")}{[[172, 306], [160, 341], [205, 358], [172, 376], [118, 379]].map(([x, y]) => <Plus key={y} x={x} y={y} s={13} c={G1} w={3} />)}</g>,
  <g key="19" transform="translate(-246 -285)">{bars([[264, 390, 12, 9], [279, 375, 12, 24], [294, 348, 12, 51], [309, 318, 12, 81], [324, 306, 12, 93], [339, 318, 12, 81], [354, 348, 12, 51], [369, 375, 12, 24], [384, 390, 12, 9]], G1)}</g>,
  <g key="20" transform="translate(-426 -285)">{bars([[447, 339, 21, 36], [483, 324, 21, 42], [519, 333, 21, 48], [555, 318, 21, 52]], G2)}{bars([[447, 351, 21, 24], [483, 351, 21, 15], [519, 357, 21, 24], [555, 354, 21, 16]], G1)}<path d="M457.500 316V385M451 316h13M451 385h13M493.500 311V391M486 311h14M486 391h14M529.500 307V394M523 307h14M523 394h14M565.500 301V397M558 301h14M558 397h14" stroke="#b5b5b5" strokeWidth="3" /></g>,
  <g key="21" transform="translate(-66 -423)">{bars([[78, 435, 27, 24], [99, 471, 9, 24], [120, 471, 12, 24], [78, 510, 6, 24], [165, 510, 21, 24]], G1)}{bars([[78, 471, 18, 24], [141, 471, 42, 24], [135, 510, 12, 24]], G2)}{bars([[126, 435, 12, 24], [174, 435, 6, 24], [198, 471, 24, 24], [123, 510, 6, 24]], O1)}{bars([[141, 435, 12, 24], [192, 435, 24, 24], [93, 510, 24, 24], [204, 510, 12, 24]], O2)}</g>,
  <g key="22" transform="translate(-246 -423)">{bars([[261, 438, 120, 24], [261, 474, 135, 24], [261, 510, 105, 24]], "#f6f6f6")}{bars([[261, 444, 75, 12], [261, 480, 120, 12], [261, 516, 63, 12]], G1)}<path d="M346.500 438v24M367.500 474v24M385.500 510v24" stroke="#b0b0b0" strokeWidth="3" /></g>,
  <g key="23" transform="translate(-426 -423)">{[[472, 506, 29, G2], [475, 464, 11, G1], [504, 457, 15, G1], [533, 459, 10, G2], [562, 473, 20, O2], [518, 488, 18, O2], [547, 504, 11, O1], [516, 522, 13, G1]].map(([x, y, r, f], i) => <circle key={i} cx={x} cy={y} r={r} fill={f as string} />)}</g>,
];

function ShowMe() {
  const hint = "flex items-center text-[12px] text-[#333]";
  return (
    <div className="absolute left-[1158px] top-[48px] flex w-[204px] flex-col items-end">
      <div className="z-10 flex h-[37px] w-[111px] items-center border-l border-r border-t border-[#dcdcdc] bg-[#fafafa] pb-[7px] pl-[11px]">
        <Svg w={15} h={16}><path d="M0 1.500h11" stroke="#85709a" strokeWidth="3" /><path d="M0 5.500h14" stroke="#84a5cb" strokeWidth="3" /><path d="M0 9.500h5" stroke="#f2a57c" strokeWidth="3" /><path d="M0 13.500h8" stroke="#f9737f" strokeWidth="3" /></Svg>
        <span className="ml-[5px] text-[13px] tracking-[-0.100px] text-[#333]">Show Me</span>
      </div>
      <div className="-mt-px h-[556px] w-full border border-[#d8d8d8] bg-[#fafafa] pl-[13px] pt-[14px] shadow-[2px_3px_4px_rgba(0,0,0,0.35)]">
        <div className="grid w-[176px] grid-cols-3 gap-1">
          {CELLS.map((c, i) => (
            <div key={i} className={`h-[42px] w-14 bg-white ${i === 3 ? "outline-2 -outline-offset-2 outline-[#dd6b38]" : "outline-1 -outline-offset-1 outline-[#dcdcdc]"}`}>
              <svg width="56" height="42" viewBox="0 0 168 126" fill="none" className="block">{c}</svg>
            </div>
          ))}
        </div>
        <div className={`mt-[17px] h-[18px] pl-0.5 ${hint}`}>For&nbsp;<b className="tracking-[-0.300px] text-[#111]">symbol maps</b>&nbsp;try</div>
        <div className={`mt-1.5 h-5 pl-0.5 ${hint}`}><span className="w-[35px] pt-1 tracking-[-0.300px]">1 geo</span><Globe c="#666" /><div className={`ml-[6px] w-[84px] bg-[#4996b2] tracking-[-0.150px] ${pill}`}>Dimension</div></div>
        <div className={`mt-2 h-5 pl-0.5 ${hint}`}><span className="w-[57px] whitespace-nowrap pt-1 tracking-[-0.100px]">0 or more</span><div className={`w-[90px] bg-[#4996b2] tracking-[-0.100px] ${pill}`}>Dimensions</div></div>
        <div className={`mt-2 h-5 pl-0.5 ${hint}`}><span className="w-[34px] whitespace-nowrap pt-1">0 to 2</span><div className={`w-[79px] bg-[#00b180] ${pill}`}>Measures</div></div>
        <p className="mt-[12px] whitespace-pre pl-0.5 text-[12px] leading-4 tracking-[-0.180px] text-[#999]">{"May use spatial measure in\nplace of geo dimension"}</p>
      </div>
    </div>
  );
}

const DashIcon = () => <Svg w={11} h={11} className="-mt-1"><path d="M.5.5h10v10H.5zM.5 5.500h10M5.500.5v10" stroke={INK} /></Svg>;
const StoryIcon = () => <Svg w={12} h={12} className="-mt-1"><path d="M1.500 1.500h2.500l2 1.500 2-1.500h2.500v9H8L6 12l-2-1.500H1.500zM6 3v3" stroke={INK} strokeWidth="1.100" /></Svg>;

function SheetTabs() {
  const tab = "flex h-full shrink-0 items-center border-r border-[#c8c8c8] pt-0.5 text-[12px] text-[#666]";
  const sheets = ["Sheet 2", "Sheet 3", "Sheet 4", "Sheet 5", "Sheet 6", "Sheet 7", "Sheet 8", "Sheet 9"];
  return (
    <div className="flex h-[30px] border-y border-[#c8c8c8] bg-[#e6e6e6]">
      <div className={`w-[131px] gap-[5px] pl-[9px] ${tab}`}><Svg w={10} h={12} className="-mt-0.5"><path d="M1 3c0-2.500 7-2.500 7 0v6.500c0 2.500-7 2.500-7 0zM1 3c0 2.300 7 2.300 7 0" stroke={INK} /></Svg>Data Source</div>
      <div className="flex h-full w-14 shrink-0 items-center justify-center border-r border-[#c8c8c8] bg-[#fafafa] text-[12px] font-semibold tracking-[-0.200px] text-[#444]">Sheet 1</div>
      {sheets.map((s) => <div key={s} className={`w-[56.800px] justify-center pr-1 ${tab}`}>{s}</div>)}
      {[1, 2, 3, 4, 5].map((n) => <div key={n} className={`w-[103.500px] gap-[5px] pl-[7.500px] tracking-[-0.280px] ${tab}`}><DashIcon />Dashboard {n}</div>)}
      <div className={`w-[71px] gap-[5px] pl-[7px] tracking-[-0.100px] ${tab}`}><StoryIcon />Story 1</div>
      <div className={`w-8 justify-center ${tab}`}><Svg w={16} h={16}><path d="M9 12.500H1.500v-11h11V8M4.500 10V7.500M7 10V4.500M9.500 9V6.500" stroke={INK} /><Plus x={12} y={12} s={3.500} c="#444" w={1.400} /></Svg></div>
      <div className={`w-8 justify-center ${tab}`}><Svg w={16} h={16}><path d="M8 11.500H1.500v-10h11V7M1.500 6h11M6.500 1.500v10" stroke={INK} /><Plus x={12} y={12} s={3.500} c="#444" w={1.400} /></Svg></div>
      <div className={`w-8 justify-center ${tab}`}><Svg w={16} h={16}><path d="M8 12l-2-1H1.500v-9H4L7 3.500 10 2h2.500v5M7 3.500V7" stroke={INK} strokeWidth="1.100" /><Plus x={12} y={12} s={3.500} c="#444" w={1.400} /></Svg></div>
    </div>
  );
}

function StatusBar() {
  const c = "h-full shrink-0 border-l border-[#d8d8d8]";
  return (
    <div className="flex h-[21px] items-center bg-[#ebebeb] text-[11px] text-[#222]">
      <span className="w-[62px] pl-[3px] pt-px tracking-[-0.250px]">15 marks</span>
      <span className="w-[938px] pl-[3px] pt-px tracking-[-0.300px]">1 row by 1 column</span>
      <div className={`w-[126px] ${c}`} /><div className={`w-7 ${c}`} /><div className={`w-[26px] ${c}`} /><div className={`w-[47px] ${c}`} />
      <div className={`flex w-[71px] items-center gap-[10px] pl-2 ${c}`}>
        <Svg w={7} h={8}><path d="M.5.5v7" stroke="#bbb" /><path d="M6.500.5v7L2 4z" fill="#bbb" /></Svg>
        <Svg w={5} h={8}><path d="M4.500.5v7L0 4z" fill="#bbb" /></Svg>
        <Svg w={5} h={8}><path d="M.5.5v7L5 4z" fill="#bbb" /></Svg>
        <Svg w={7} h={8}><path d="M6.500.5v7" stroke="#bbb" /><path d="M.5.5v7L5 4z" fill="#bbb" /></Svg>
      </div>
      <div className={`flex items-center gap-[10px] pl-2 ${c}`}>
        <Svg w={11} h={10}><path d="M0 1.500h11M0 5h11M0 8.500h11" stroke="#bdbdbd" strokeWidth="2.500" strokeDasharray="3 1" /></Svg>
        <Svg w={11} h={10}><path d="M0 0h11v6H0z" fill="#bdbdbd" /><path d="M0 8.500h11" stroke="#bdbdbd" strokeWidth="2.500" strokeDasharray="3 1" /></Svg>
        <Svg w={11} h={10}><path d="M0 0h11v10H0z" fill="#555" /></Svg>
      </div>
    </div>
  );
}

function Taskbar() {
  return (
    <div className="flex h-10 items-center bg-linear-to-r from-[#1d1f21] via-[#15191f] via-50% to-[#0c1017] text-white">
      <div className="flex h-full w-12 items-center justify-center bg-[#2c2c2c]"><Svg w={16} h={16}><path d="M0 2.300 6.700 1.400V7.600H0zM7.600 1.300 16 0V7.600H7.600zM0 8.400h6.700v6.200L0 13.700zM7.600 8.400H16V16l-8.400-1.200z" fill="#fff" /></Svg></div>
      <div className="flex h-full w-[343px] items-center bg-[#333] pl-2">
        <Svg w={24} h={24}><circle cx="12" cy="12" r="9.300" stroke="#fff" strokeWidth="2.400" /></Svg>
        <span className="ml-2 flex-1 pt-px font-['Open_Sans'] text-[14.500px] tracking-[-0.280px] text-[#a9a9a9]">Type here to search</span>
        <Svg w={14} h={18} className="mr-3"><rect x="4.500" y="1" width="5" height="10" rx="2.500" stroke="#bbb" /><path d="M1.500 8.500c0 7 11 7 11 0M7 14v3.500M4.500 17.500h5" stroke="#bbb" /></Svg>
      </div>
      <Svg w={20} h={18} className="ml-[16px]"><path d="M1.500 1v3.500h10V1M1.500 17v-3.500h10V17M1.500 6.500h10v5h-10zM15.500 1v16" stroke="#fff" strokeWidth="1.200" /><path d="M14 5.500h3.500v3H14z" fill="#fff" /></Svg>
      <Svg w={24} h={24} className="ml-[28px]"><path d="M1 3h8l2 2h11v15H1z" fill="#f0b429" /><path d="M1 6h21v14H1z" fill="#ffe08a" /><path d="M5 13h14v8h-4v-4h-6v4H5z" fill="#3ba5e0" /></Svg>
      <Svg w={24} h={26} className="ml-[25px]"><path d="M10.500 1h3L19 20H5z" fill="#f07f09" /><path d="m9.500 5-1.200 4h7.400L14.500 5zM7.300 12.500 6 17h12l-1.300-4.500z" fill="#eee" /><path d="M3 19h18l1.500 5h-21z" fill="#f07f09" /></Svg>
      <div className="ml-[13px] flex h-full w-12 items-center justify-center border-b-[3px] border-[#b146c2] bg-[#44464b] pt-[3px]"><div className="bg-white"><TableauMark mono="#2b6f93" size={24} /></div></div>
      <Svg w={16} h={16} className="ml-[490px]"><circle cx="5.500" cy="5.500" r="2.500" stroke="#fff" strokeWidth="1.200" /><circle cx="11.500" cy="3" r="2.200" stroke="#fff" strokeWidth="1.200" /><path d="M1 15c.5-7 8.500-7 9 0M9.500 8c3-2 5 0 5.500 3" stroke="#fff" strokeWidth="1.200" /></Svg>
      <Svg w={12} h={8} className="ml-[22px]"><path d="m1 7 5-5.500L11 7" stroke="#fff" strokeWidth="1.300" /></Svg>
      <Svg w={15} h={10} className="ml-[11px]"><path d="M.5 1.500h12v7H.5z" stroke="#fff" strokeWidth="1.200" /><path d="M2.500 3.500h5v3h-5z" fill="#fff" /><path d="M14 3.500v3" stroke="#fff" strokeWidth="1.500" /></Svg>
      <Svg w={14} h={14} className="ml-[10px]"><path d="M1 13C1 5 6 1 13 1M4 13c0-5 3-8.500 9-8.500M7 13c0-3 2-5.500 6-5.500" stroke="#aaa" strokeWidth="1.200" /><path d="M10 13c0-2 1-3 3-3v3z" fill="#fff" /></Svg>
      <Svg w={17} h={17} className="ml-[8px]"><path d="M7 0c2 1.500 4 2 6.500 2v5c0 4-2.500 7-6.500 9C3 14 .5 11 .5 7V2C3 2 5 1.500 7 0z" fill="#fff" /><path d="M7 0v16M.5 7h13" stroke="#111" /><path d="m11.500 6.500 5.500 10H6z" fill="#ffb900" /><path d="M11.500 10v3M11.500 14v1" stroke="#111" strokeWidth="1.200" /></Svg>
      <span className="ml-[9px] font-['Open_Sans'] text-[12px] tracking-[-0.500px]">ENG</span>
      <div className="ml-[10px] flex w-[62px] flex-col items-center font-['Open_Sans'] text-[12px] leading-[18px] tracking-[-0.550px]"><span>05:53</span><span>05-10-2023</span></div>
      <svg width="28" height="26" viewBox="0 0 28 26" fill="none" className="ml-[16px] mt-1.5 block shrink-0"><path d="M2 1h16v12H9l-3 3v-3H2z" fill="#fff" /><path d="M5 4h10M5 7h10M5 10h6" stroke="#111" /><circle cx="17" cy="16" r="8" fill="#222" stroke="#999" /><text x="14" y="20" fill="#fff" fontSize="11" fontFamily="Open Sans">1</text></svg>
    </div>
  );
}

const MENU: [string, string][] = [["File", "w-[34px]"], ["Data", "w-10"], ["Worksheet", "w-[72px]"], ["Dashboard", "w-[73px]"], ["Story", "w-[43px]"], ["Analysis", "w-[59px]"], ["Map", "w-10"], ["Format", "w-[54px]"], ["Server", "w-12"], ["Window", "w-[60px]"], ["Help", "w-10"]];

export default function App() {
  return (
    <div className="relative flex h-[768px] w-[1366px] flex-col overflow-hidden bg-[#f5f5f5] font-['Noto_Sans',sans-serif]">
      <div className="flex h-[22px] items-center bg-white font-['Open_Sans']">
        <div className="ml-[3px] flex size-[15px] items-center justify-center border-b border-r border-[#bbb] bg-[#fafafa]"><TableauMark mono="#1f77a4" size={16} /></div>
        <span className="ml-[5px] flex-1 pt-px text-[12px] tracking-[-0.350px] text-black">Tableau - Sheet 1</span>
        <Svg w={10} h={10} className="mr-[36px]"><path d="M0 4.500h10" stroke="#000" /></Svg>
        <Svg w={10} h={10} className="mr-[36px]"><path d="M.5 1.500h7v7h-7zM2.500 1.500v-2h7v7h-2M2.500.5h7" stroke="#000" /></Svg>
        <Svg w={11} h={11} className="mr-[19px]"><path d="m.5.5 10 10M10.500.5l-10 10" stroke="#000" /></Svg>
      </div>
      <div className="flex h-[21px] items-center bg-white pl-2 pt-0.5 font-['Open_Sans'] text-[12px] tracking-[-0.300px] text-black">
        {MENU.map(([m, w]) => <span key={m} className={`shrink-0 ${w}`}>{m}</span>)}
      </div>
      <Toolbar />
      <div className="flex h-[593px]">
        <DataPane />
        <Cards />
        <Workspace />
      </div>
      <SheetTabs />
      <StatusBar />
      <Taskbar />
      <ShowMe />
    </div>
  );
}
